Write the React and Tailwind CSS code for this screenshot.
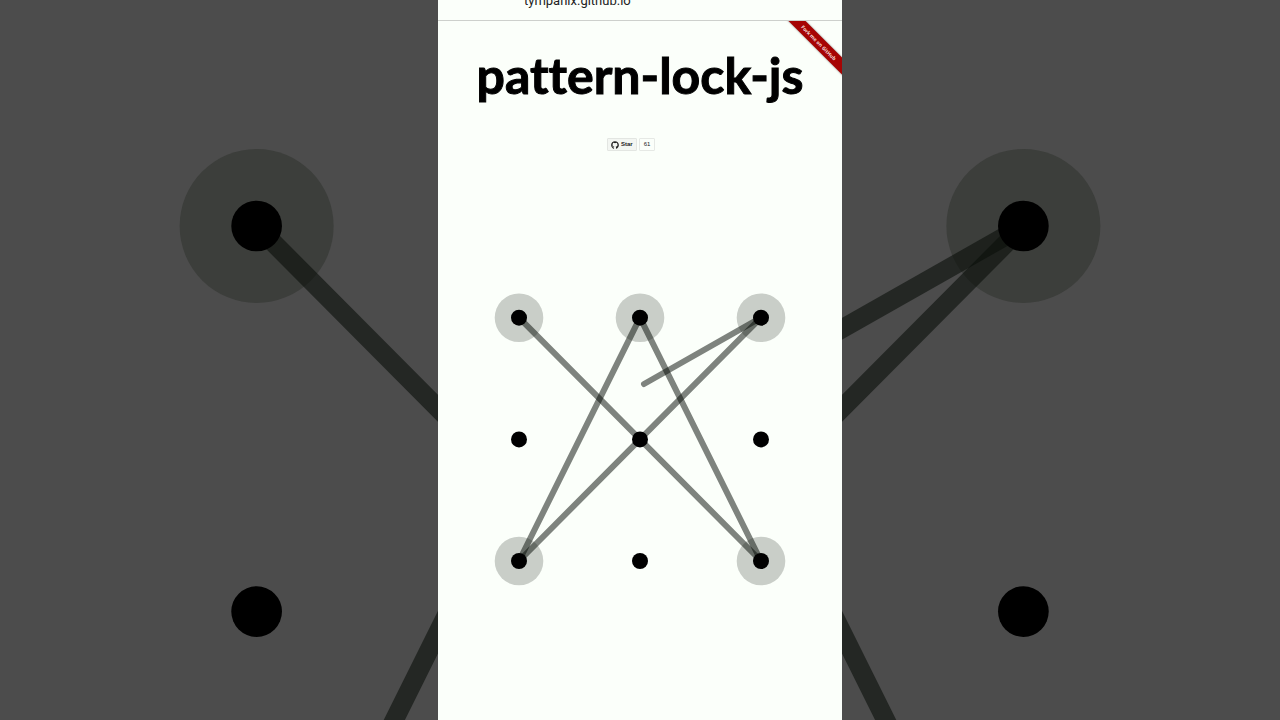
import { FaGithub } from 'react-icons/fa';

const COLS = [81, 202, 323];
const ROWS = [80.7, 202.4, 324];

// dots are numbered 0-8, left to right and top to bottom
const PATTERN = [0, 8, 1, 6, 2];
const POINTER = { x: 206, y: 147 };

const point = (i) => ({ x: COLS[i % 3], y: ROWS[Math.floor(i / 3)] });

function PatternLock({ className, viewBox = '0 0 404 404', preserveAspectRatio, ring, line }) {
  const stops = [...PATTERN.map(point), POINTER];

  return (
    <svg className={className} viewBox={viewBox} preserveAspectRatio={preserveAspectRatio} aria-hidden="true">
      {PATTERN.map((i) => (
        <circle key={i} cx={point(i).x} cy={point(i).y} r="24.3" className={ring} />
      ))}
      {stops.slice(1).map((to, i) => (
        <line
          key={i}
          x1={stops[i].x}
          y1={stops[i].y}
          x2={to.x}
          y2={to.y}
          strokeWidth="6"
          strokeLinecap="round"
          className={line}
        />
      ))}
      {ROWS.map((y) => COLS.map((x) => <circle key={`${x}-${y}`} cx={x} cy={y} r="8" fill="#000" />))}
    </svg>
  );
}

function AddressBar() {
  return (
    <div className="flex h-[21px] shrink-0 items-start overflow-hidden border-b border-[#cdd0cc] pl-[86px]">
      <span className="-mt-[7px] font-['Roboto',sans-serif] text-[13px] leading-4 text-[#222]">tympanix.github.io</span>
    </div>
  );
}

function ForkRibbon() {
  return (
    <div className="absolute top-0 right-0 h-16 w-16 overflow-hidden">
      <a
        href="#fork"
        className="absolute top-[15px] -right-6 w-24 rotate-45 bg-[#a60404] pl-0.5 text-center font-['Open_Sans',sans-serif] text-[5px] leading-[12px] font-bold text-[#f3dcdc] shadow-[0_0_2px_rgba(0,0,0,0.5)]"
      >
        Fork me on GitHub
      </a>
    </div>
  );
}

function StarButton() {
  return (
    <div className="flex gap-0.5 pl-[169px] font-['Liberation_Sans',Arial,sans-serif] text-[6px] leading-[11px] text-[#222]">
      <a href="#star" className="flex items-center gap-0.5 rounded-[1px] border border-[#e3e6e2] bg-[#f3f6f2] px-[3px] font-bold">
        <FaGithub className="h-2 w-2" />
        Star
      </a>
      <a href="#stargazers" className="rounded-[1px] border border-[#e6e9e5] bg-[#fbfffa] px-1">
        61
      </a>
    </div>
  );
}

export default function App() {
  return (
    <div className="relative flex h-screen justify-center overflow-hidden bg-[#4c4c4c]">
      <PatternLock
        className="absolute inset-0 h-full w-full"
        viewBox="0 -237 404 720"
        preserveAspectRatio="xMidYMid slice"
        ring="fill-[#3c3e3b]"
        line="stroke-[#0a0f0a]/60"
      />

      <div className="relative flex aspect-[404/720] h-full flex-col bg-[#fbfffa]">
        <AddressBar />
        <main className="relative flex-1">
          <h1 className="pt-[22px] pb-0.5 text-center font-['Lato',sans-serif] text-[50px] leading-[64px] font-bold text-black [font-variant-ligatures:none] [-webkit-text-stroke:1px_black]">
            pattern-lock-js
          </h1>
          <div className="mt-[29px] mb-[86px]">
            <StarButton />
          </div>
          <PatternLock className="block w-full" ring="fill-[#c9cec8]" line="stroke-[#010801]/50" />
          <ForkRibbon />
        </main>
      </div>
    </div>
  );
}
